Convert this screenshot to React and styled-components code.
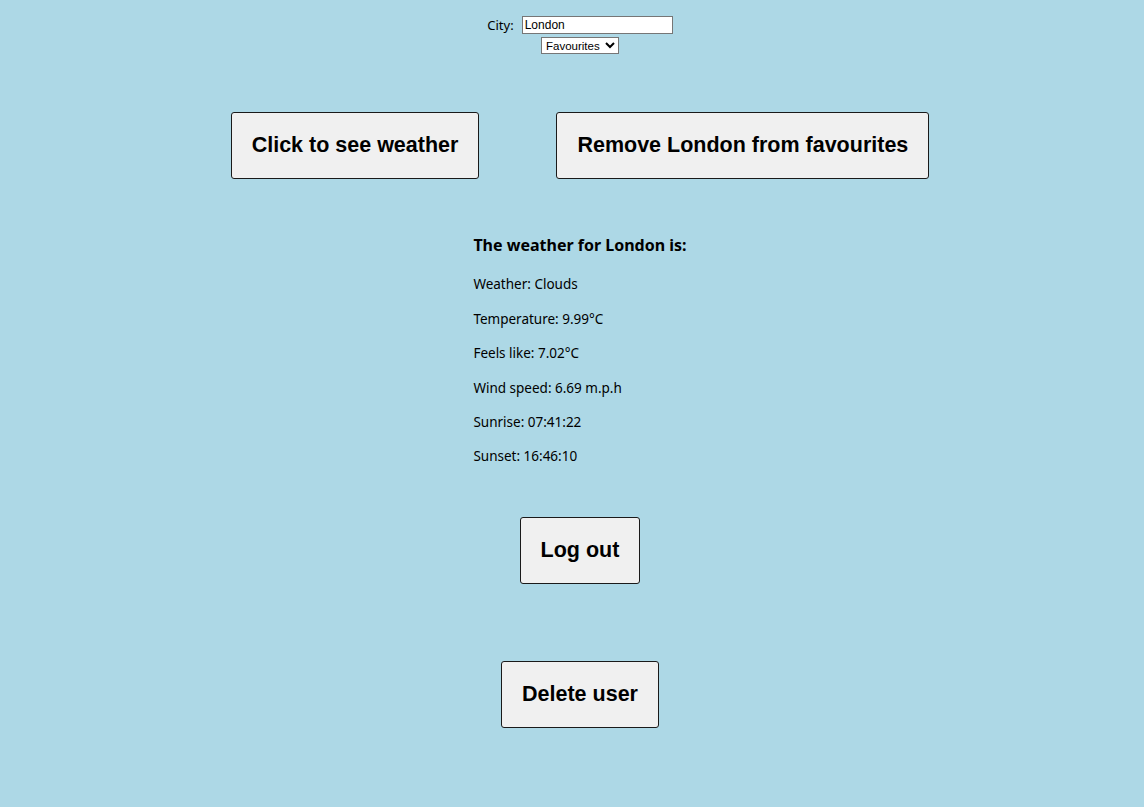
import React from "react";
import styled, { createGlobalStyle } from "styled-components";

const Global = createGlobalStyle`
  html, body { margin: 0; padding: 0; background: #add8e6; }
  body { font-family: "Noto Sans", "Open Sans", sans-serif; color: #000; }
`;

const Page = styled.div`
  display: flex;
  flex-direction: column;
  align-items: center;
  padding: 16px 0 0 16px;
  min-height: 807px;
  box-sizing: border-box;
`;

const CityRow = styled.div`
  display: flex;
  align-items: center;
  gap: 8px;
  font-size: 13px;
  height: 18px;
`;

const TextInput = styled.input`
  width: 151px;
  height: 18px;
  box-sizing: border-box;
  border: 1px solid #767676;
  padding: 0 2px;
  font-family: "Liberation Sans", Arial, sans-serif;
  font-size: 12px;
  background: #fff;
  outline: none;
`;

const Select = styled.select`
  margin-top: 3px;
  width: 78px;
  height: 17px;
  box-sizing: border-box;
  border: 1px solid #767676;
  border-radius: 0;
  padding: 0;
  font-family: "Liberation Sans", Arial, sans-serif;
  font-size: 11.5px;
  background: #fff;
`;

const ButtonRow = styled.div`
  display: flex;
  gap: 77px;
  margin-top: 58px;
`;

const BigButton = styled.button`
  height: 67px;
  padding: 0 20px;
  border: 1px solid #1a1a1a;
  border-radius: 3px;
  background: #f0f0f0;
  font-family: "Liberation Sans", Arial, sans-serif;
  font-weight: bold;
  font-size: 21.5px;
  color: #000;
  margin-top: ${(p) => p.$top || 0}px;
`;

const Weather = styled.div`
  margin-top: 55px;
  display: flex;
  flex-direction: column;
  align-items: flex-start;
  gap: 14.4px;
`;

const Heading = styled.h3`
  margin: 0 0 4px;
  font-size: 16px;
  font-weight: bold;
  line-height: 22px;
`;

const Line = styled.p`
  margin: 0;
  font-size: 13.5px;
  line-height: 20px;
`;

const lines = [
  "Weather: Clouds",
  "Temperature: 9.99°C",
  "Feels like: 7.02°C",
  "Wind speed: 6.69 m.p.h",
  "Sunrise: 07:41:22",
  "Sunset: 16:46:10",
];

export default function App() {
  return (
    <>
      <Global />
      <Page>
        <CityRow>
          <label>City:</label>
          <TextInput defaultValue="London" />
        </CityRow>
        <Select defaultValue="fav">
          <option value="fav">Favourites</option>
        </Select>
        <ButtonRow>
          <BigButton>Click to see weather</BigButton>
          <BigButton>Remove London from favourites</BigButton>
        </ButtonRow>
        <Weather>
          <Heading>The weather for London is:</Heading>
          {lines.map((l) => (
            <Line key={l}>{l}</Line>
          ))}
        </Weather>
        <BigButton $top={51}>Log out</BigButton>
        <BigButton $top={77}>Delete user</BigButton>
      </Page>
    </>
  );
}
